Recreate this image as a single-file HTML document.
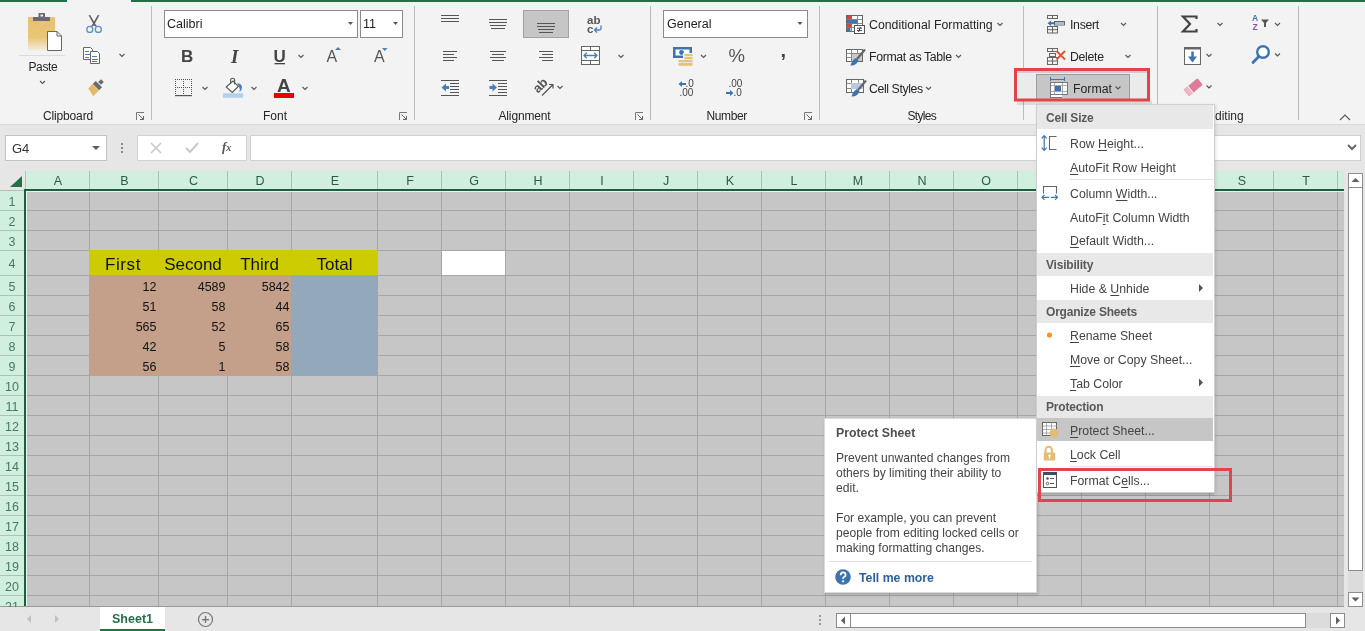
<!DOCTYPE html>
<html><head><meta charset="utf-8">
<style>
*{box-sizing:border-box;margin:0;padding:0}
html,body{width:1365px;height:631px;overflow:hidden;background:#e6e6e6;font-family:"Liberation Sans",sans-serif;color:#262626;position:relative}
.a{position:absolute}
.t{position:absolute;white-space:nowrap;font-size:12px;line-height:14px}
.sep{position:absolute;top:6px;width:1px;height:114px;background:#bcbcbc}
.glabel{position:absolute;top:109px;font-size:12px;line-height:14px;color:#262626;white-space:nowrap}
.chev{position:absolute;width:4px;height:4px;border-right:1px solid #555;border-bottom:1px solid #555;transform:rotate(45deg)}
.box{position:absolute;background:#fff;border:1px solid #ababab}
.dd{position:absolute;width:0;height:0;border-left:4px solid transparent;border-right:4px solid transparent;border-top:4px solid #606060}
.ch{position:absolute;top:171px;height:18px;line-height:20px;text-align:center;color:#2d5c43;font-size:12.5px}
.rh{position:absolute;left:0;width:24px;text-align:center;color:#467a5b;font-size:12.5px}
.big{position:absolute;top:252px;height:24px;line-height:26px;text-align:center;font-size:17px;color:#111}
.num{position:absolute;width:60px;text-align:right;font-size:12.5px;line-height:20px;height:20px;color:#111}
.mh{position:absolute;left:1px;width:175px;height:23px;background:#e8e8e8;font-weight:bold;color:#5a5a5a;font-size:12.5px;line-height:23px;padding-left:8px}
.mi{position:absolute;left:1070px;font-size:12.3px;color:#444;line-height:14px;white-space:nowrap}
.u{text-decoration:underline;text-underline-offset:2px}
.mhd{position:absolute;left:1046px;font-size:12px;letter-spacing:-0.2px;line-height:14px;font-weight:bold;color:#595959;white-space:nowrap}

</style></head><body><div style="will-change:transform;position:absolute;left:0;top:0;width:1365px;height:631px;overflow:hidden">
<div class="a" style="left:0;top:0;width:1365px;height:125px;background:#f3f3f3;border-bottom:1px solid #dadada"></div>
<div class="a" style="left:0;top:0;width:67px;height:2px;background:#217346"></div>
<div class="a" style="left:131px;top:0;width:1234px;height:2px;background:#217346"></div>
<div class="sep" style="left:151px"></div>
<div class="sep" style="left:414px"></div>
<div class="sep" style="left:650px"></div>
<div class="sep" style="left:819px"></div>
<div class="sep" style="left:1023px"></div>
<div class="sep" style="left:1157px"></div>
<div class="sep" style="left:1298px"></div>
<div class="glabel" style="left:43px;letter-spacing:-0.15px">Clipboard</div>
<div class="glabel" style="left:263px">Font</div>
<div class="glabel" style="left:498.5px;letter-spacing:-0.15px">Alignment</div>
<div class="glabel" style="left:706.5px;letter-spacing:-0.4px">Number</div>
<div class="glabel" style="left:907.5px;letter-spacing:-0.7px">Styles</div>
<div class="glabel" style="left:1207px">Editing</div>
<!-- launchers -->
<svg class="a" style="left:0;top:0" width="1365" height="125">
 <defs>
  <linearGradient id="pg" x1="0" y1="0" x2="0" y2="1"><stop offset="0" stop-color="#e8c272"/><stop offset="0.6" stop-color="#e9c576"/><stop offset="1" stop-color="#f3efe6"/></linearGradient>
  <g id="launch"><path d="M0.5,8 V0.5 H8" fill="none" stroke="#777" stroke-width="1"/><path d="M2.5,2.5 L7.5,7.5 M4,7.5 H7.5 V4" fill="none" stroke="#666" stroke-width="1"/></g>
  <path id="chev" d="M0,0 L2.5,2.5 L5,0" fill="none" stroke="#555" stroke-width="1.1"/>
 </defs>
 <use href="#launch" x="136" y="112"/>
 <use href="#launch" x="399" y="112"/>
 <use href="#launch" x="635" y="112"/>
 <use href="#launch" x="804" y="112"/>
 <!-- Paste -->
 <rect x="28" y="17" width="27" height="34" fill="url(#pg)"/>
 <rect x="33" y="17" width="17" height="4" fill="#6b6b6b"/>
 <rect x="38.5" y="13" width="6.5" height="4" fill="#6b6b6b"/>
 <rect x="40.5" y="14.5" width="2.5" height="2" fill="#f3f3f3"/>
 <path d="M47.5,31.5 H57 L61.5,36 V50.5 H47.5 Z" fill="#fff" stroke="#666" stroke-width="1"/>
 <path d="M57,31.5 V36 H61.5" fill="none" stroke="#666" stroke-width="1"/>
 <rect x="19" y="55" width="46" height="1" fill="#dcdcdc"/>
 <use href="#chev" x="40" y="81"/>
 <!-- scissors -->
 <path d="M88.6,15.2 L90.2,15 L95.6,24.5 L94.4,26 Z" fill="#606060"/>
 <path d="M99.4,15.2 L97.8,15 L92.4,24.5 L93.6,26 Z" fill="#606060"/>
 <path d="M91.5,26.5 L94,24 L96.5,26.5" fill="none" stroke="#606060" stroke-width="1.3"/>
 <circle cx="89.8" cy="29.4" r="3" fill="none" stroke="#5b8fc7" stroke-width="1.3"/>
 <circle cx="98.3" cy="29.4" r="3" fill="none" stroke="#5b8fc7" stroke-width="1.3"/>
 <!-- copy -->
 <path d="M83.5,47.5 H90.5 L92.5,49.5 V59.5 H83.5 Z" fill="#fff" stroke="#666" stroke-width="1"/>
 <path d="M85,51.5 H89 M85,54.5 H90 M85,57.5 H89" stroke="#4a7eb8" stroke-width="1" shape-rendering="crispEdges"/>
 <path d="M90.5,51.5 H97.5 L99.5,53.5 V63.5 H90.5 Z" fill="#fff" stroke="#666" stroke-width="1"/>
 <path d="M92,56.5 H97 M92,59.5 H98 M92,61.5 H97" stroke="#4a7eb8" stroke-width="1" shape-rendering="crispEdges"/>
 <use href="#chev" x="119.5" y="54"/>
 <!-- format painter -->
 <g transform="rotate(45 95 88)">
  <rect x="93" y="77.5" width="4" height="4" fill="#6b6b6b"/>
  <rect x="90.5" y="82.5" width="9" height="4.2" fill="#6b6b6b"/>
  <path d="M90.5,87 H99.5 V95 L90.5,93 Z" fill="#e8b86a"/>
 </g>
</svg>
<div class="t" style="left:28.5px;top:60px;font-size:12px;letter-spacing:-0.4px">Paste</div>
<div class="box" style="left:164px;top:10px;width:194px;height:28px;border-color:#8a8a8a"></div>
<div class="t" style="left:167px;top:17px;font-size:12.5px;color:#222">Calibri</div>
<div class="box" style="left:360px;top:10px;width:43px;height:28px;border-color:#8a8a8a"></div>
<div class="t" style="left:363px;top:17px;font-size:12.5px;color:#222">11</div>
<svg class="a" style="left:0;top:0" width="420" height="125">
 <defs><path id="chev2" d="M0,0 L2.5,2.5 L5,0" fill="none" stroke="#555" stroke-width="1.1"/></defs>
 <path d="M348,22 H353 L350.5,25 Z" fill="#555"/>
 <path d="M393,22 H398 L395.5,25 Z" fill="#555"/>
 <use href="#chev2" x="298.5" y="55"/>
 <rect x="274.5" y="63" width="10.5" height="1.3" fill="#444"/>
 <path d="M335,50 L338,47 L341,50 Z" fill="#4a7eb8"/>
 <path d="M382,48 L387.5,48 L384.75,51 Z" fill="#4a7eb8"/>
 <!-- borders -->
 <path d="M175,79.5 H192 M175,87.5 H192 M175.5,79 V95 M183.5,79 V95 M191.5,79 V95" fill="none" stroke="#555" stroke-width="1" stroke-dasharray="1,1" shape-rendering="crispEdges"/>
 <rect x="175" y="95" width="17" height="1.2" fill="#555"/>
 <use href="#chev2" x="202.5" y="87"/>
 <!-- fill bucket -->
 <rect x="223" y="93.3" width="20" height="4.5" fill="#b4d0ea"/>
 <path d="M226.3,87 L233,81 L238.3,86.4 L232.3,92.4 Z" fill="#fff" stroke="#555" stroke-width="1.1" stroke-linejoin="miter"/>
 <path d="M230.6,83.5 V80.3 A2,2 0 0 1 234.6,80.3 V84.6" fill="none" stroke="#555" stroke-width="1.1"/>
 <path d="M237,83.2 Q241.5,83.5 242,87 Q242,90 239.5,92.2 Q240.5,88.5 238.6,86 Z" fill="#4a7eb8"/>
 <use href="#chev2" x="251.5" y="87"/>
 <!-- font color -->
 <rect x="274" y="93" width="20" height="5" fill="#e80000"/>
 <use href="#chev2" x="302.5" y="87"/>
</svg>
<div class="t" style="left:181px;top:48px;font-size:17px;line-height:18px;font-weight:bold;color:#444">B</div>
<div class="t" style="left:231px;top:47px;font-size:19px;line-height:20px;font-weight:bold;font-style:italic;font-family:'Liberation Serif',serif;color:#444">I</div>
<div class="t" style="left:273.5px;top:48px;font-size:17px;line-height:18px;font-weight:bold;color:#444">U</div>
<div class="t" style="left:326.5px;top:48px;font-size:16px;line-height:17px;color:#555">A</div>
<div class="t" style="left:374px;top:48px;font-size:16px;line-height:17px;color:#555">A</div>
<div class="t" style="left:277px;top:76px;font-size:19px;line-height:20px;font-weight:bold;color:#444">A</div>
<div class="a" style="left:523px;top:10px;width:46px;height:28px;background:#c6c6c6;border:1px solid #a2a2a2"></div>
<svg class="a" style="left:0;top:0" width="660" height="125" shape-rendering="crispEdges">
 <g fill="#555">
 <!-- top align -->
 <rect x="441" y="15" width="18" height="1"/><rect x="441" y="18" width="18" height="1"/><rect x="441" y="21" width="18" height="1"/>
 <!-- middle align -->
 <rect x="489" y="19" width="18" height="1"/><rect x="489" y="22" width="18" height="1"/><rect x="490" y="25" width="16" height="1"/><rect x="491" y="28" width="14" height="1"/>
 <!-- bottom align -->
 <rect x="537" y="23" width="18" height="1"/><rect x="537" y="26" width="18" height="1"/><rect x="538" y="29" width="16" height="1"/><rect x="539" y="32" width="14" height="1"/>
 <!-- left align -->
 <rect x="443" y="51" width="14" height="1"/><rect x="443" y="54" width="11" height="1"/><rect x="443" y="57" width="14" height="1"/><rect x="443" y="60" width="11" height="1"/>
 <!-- center -->
 <rect x="490" y="51" width="16" height="1"/><rect x="492" y="54" width="12" height="1"/><rect x="490" y="57" width="16" height="1"/><rect x="492" y="60" width="12" height="1"/>
 <!-- right -->
 <rect x="539" y="51" width="14" height="1"/><rect x="542" y="54" width="11" height="1"/><rect x="539" y="57" width="14" height="1"/><rect x="542" y="60" width="11" height="1"/>
 <!-- decrease indent -->
 <rect x="441" y="80" width="18" height="1"/><rect x="450" y="83" width="9" height="1"/><rect x="450" y="86" width="9" height="1"/><rect x="450" y="89" width="9" height="1"/><rect x="450" y="92" width="9" height="1"/><rect x="441" y="95" width="18" height="1"/>
 <!-- increase indent -->
 <rect x="489" y="80" width="18" height="1"/><rect x="498" y="83" width="9" height="1"/><rect x="498" y="86" width="9" height="1"/><rect x="498" y="89" width="9" height="1"/><rect x="498" y="92" width="9" height="1"/><rect x="489" y="95" width="18" height="1"/>
 </g>
</svg>
<svg class="a" style="left:0;top:0" width="660" height="125">
 <defs><path id="chev3" d="M0,0 L2.5,2.5 L5,0" fill="none" stroke="#555" stroke-width="1.1"/></defs>
 <!-- wrap arrow -->
 <path d="M601,25.5 V28.5 Q601,30 599.5,30 H595" fill="none" stroke="#4a7eb8" stroke-width="1.3"/>
 <path d="M597,27.5 L594.5,30 L597,32.5" fill="none" stroke="#4a7eb8" stroke-width="1.3"/>
 <!-- merge -->
 <g shape-rendering="crispEdges" fill="#666">
 <rect x="581" y="46" width="19" height="19" fill="#fff"/>
 <rect x="581" y="46" width="19" height="1"/><rect x="581" y="64" width="19" height="1"/>
 <rect x="581" y="46" width="1" height="19"/><rect x="599" y="46" width="1" height="19"/>
 <rect x="581" y="50" width="19" height="1"/><rect x="581" y="60" width="19" height="1"/>
 <rect x="590" y="46" width="1" height="4"/><rect x="590" y="61" width="1" height="4"/>
 </g>
 <path d="M584,55.5 H597 M586.7,52.8 L584,55.5 L586.7,58.2 M594.3,52.8 L597,55.5 L594.3,58.2" stroke="#4a7eb8" stroke-width="1.3" fill="none"/>
 <use href="#chev3" x="618.5" y="55"/>
 <!-- indent arrows -->
 <path d="M441.5,87.5 L446,83.5 V86 H449 V89 H446 V91.5 Z" fill="#4a7eb8"/>
 <path d="M497,87.5 L492.5,83.5 V86 H489.5 V89 H492.5 V91.5 Z" fill="#4a7eb8"/>
 <!-- orientation -->
 <path d="M542,95.5 L553,84.5 M549,84.5 H553 V88.5" stroke="#555" stroke-width="1.2" fill="none"/>
 <use href="#chev3" x="557.5" y="86"/>
</svg>
<div class="t" style="left:587px;top:14px;font-size:11.5px;line-height:12px;font-weight:bold;color:#555;letter-spacing:0px">ab</div>
<div class="t" style="left:587px;top:23px;font-size:11.5px;line-height:12px;font-weight:bold;color:#555">c</div>
<div class="t" style="left:533px;top:78.5px;font-size:13px;line-height:13px;font-weight:bold;color:#555;transform:rotate(-45deg);transform-origin:7px 7px">ab</div>
<div class="box" style="left:663px;top:10px;width:145px;height:28px;border-color:#8a8a8a"></div>
<div class="t" style="left:667px;top:17px;font-size:12.5px;color:#222">General</div>
<svg class="a" style="left:0;top:0" width="830" height="125">
 <defs><path id="chev4" d="M0,0 L2.5,2.5 L5,0" fill="none" stroke="#555" stroke-width="1.1"/></defs>
 <path d="M797.5,22 H802.5 L800,25 Z" fill="#555"/>
 <!-- accounting -->
 <rect x="673" y="47" width="19" height="11" fill="#3d74b0"/>
 <rect x="675.5" y="49.5" width="14" height="6" fill="#fff"/>
 <circle cx="681.5" cy="52.5" r="2.4" fill="#3d74b0"/>
 <rect x="683" y="53" width="10" height="13.5" fill="#f3f3f3"/>
 <rect x="678" y="59" width="7" height="7.5" fill="#f3f3f3"/>
 <g fill="#e6c277">
  <rect x="684.5" y="54" width="8" height="2.2"/><rect x="684.5" y="57" width="8" height="2.2"/><rect x="684.5" y="60" width="8" height="2.2"/>
  <rect x="678.5" y="60" width="6.5" height="2.2"/><rect x="678.5" y="63" width="6.5" height="2.8"/><rect x="684.5" y="63" width="8" height="2.8"/>
 </g>
 <use href="#chev4" x="701" y="55"/>
 <!-- increase decimal arrow -->
 <path d="M678.5,84 L682,81 V83 H686 V85 H682 V87 Z" fill="#3d74b0"/>
 <path d="M733.5,93 L730,90 V92 H726 V94 H730 V96 Z" fill="#3d74b0"/>
</svg>
<div class="t" style="left:728.5px;top:46px;font-size:18.5px;line-height:20px;color:#555">%</div>
<div class="t" style="left:780.5px;top:40px;font-size:20px;line-height:20px;font-weight:bold;color:#444">,</div>
<div class="t" style="left:685.5px;top:78px;font-size:10px;line-height:11px;color:#444">.0</div>
<div class="t" style="left:679.5px;top:87px;font-size:10px;line-height:11px;color:#444">.00</div>
<div class="t" style="left:728.5px;top:78px;font-size:10px;line-height:11px;color:#444">.00</div>
<div class="t" style="left:733.5px;top:87px;font-size:10px;line-height:11px;color:#444">.0</div>
<svg class="a" style="left:0;top:0" width="1030" height="125">
 <defs><path id="chev5" d="M0,0 L2.5,2.5 L5,0" fill="none" stroke="#555" stroke-width="1.1"/></defs>
 <!-- CF -->
 <rect x="846.5" y="15.5" width="16" height="16" fill="#fff" stroke="#666" stroke-width="1"/>
 <path d="M846.5,19.5 H862.5 M846.5,23.5 H862.5 M846.5,27.5 H862.5 M851.5,15.5 V31.5 M857.5,15.5 V31.5" stroke="#888" stroke-width="1" fill="none"/>
 <rect x="847" y="16" width="4.5" height="3.5" fill="#d9442c"/>
 <rect x="847" y="20" width="10.5" height="3.5" fill="#3d74b0"/>
 <rect x="847" y="24" width="4.5" height="3.5" fill="#d9442c"/>
 <rect x="847" y="28" width="3.5" height="3.5" fill="#3d74b0"/>
 <rect x="854.5" y="25.5" width="10" height="8" fill="#fff" stroke="#555" stroke-width="1"/>
 <path d="M857,28.2 H862 M857,30.6 H862 M860.5,27 L858.5,32" stroke="#333" stroke-width="0.9"/>
 <use href="#chev5" x="997.5" y="23"/>
 <!-- FaT -->
 <rect x="846.5" y="49.5" width="16" height="12" fill="#fff" stroke="#666" stroke-width="1"/>
 <path d="M846.5,53.5 H862.5 M846.5,57.5 H862.5 M851.5,49.5 V61.5 M857.5,49.5 V61.5" stroke="#888" stroke-width="1" fill="none"/>
 <rect x="852" y="54" width="10" height="7" fill="#c9c9c9"/>
 <path d="M865,49.5 L857,59" stroke="#666" stroke-width="2.2"/>
 <path d="M856,58 L858.5,60.5 Q856,66 850.5,65.5 Q852,60 856,58 Z" fill="#3d74b0"/>
 <use href="#chev5" x="956" y="55"/>
 <!-- Cell styles -->
 <rect x="846.5" y="79.5" width="17" height="13" fill="#fff" stroke="#666" stroke-width="1"/>
 <path d="M846.5,83.5 H863.5 M846.5,88.5 H863.5 M851.5,79.5 V92.5 M858.5,79.5 V92.5" stroke="#888" stroke-width="1" fill="none"/>
 <rect x="851" y="83" width="12" height="6" fill="#b7c9e2"/>
 <path d="M866,80.5 L858,90" stroke="#666" stroke-width="2.2"/>
 <path d="M857,89 L859.5,91.5 Q857,97 851.5,96.5 Q853,91 857,89 Z" fill="#3d74b0"/>
 <use href="#chev5" x="926" y="87"/>
</svg>
<div class="t" style="left:869px;top:18px;font-size:12.3px;color:#262626">Conditional Formatting</div>
<div class="t" style="left:869px;top:50px;font-size:12.3px;color:#262626;letter-spacing:-0.35px">Format as Table</div>
<div class="t" style="left:869px;top:82px;font-size:12.3px;color:#262626;letter-spacing:-0.4px">Cell Styles</div>
<svg class="a" style="left:0;top:0" width="1365" height="125">
 <defs><path id="chev6" d="M0,0 L2.5,2.5 L5,0" fill="none" stroke="#555" stroke-width="1.1"/></defs>
 <!-- Insert icon -->
 <g fill="none" stroke="#666" stroke-width="1">
  <rect x="1047.5" y="15.5" width="10" height="3"/><path d="M1052.5,15.5 V18.5"/>
  <rect x="1047.5" y="26.5" width="10" height="6.5"/><path d="M1047.5,29.7 H1057.5 M1052.5,26.5 V33"/>
  <rect x="1054.5" y="21.5" width="10" height="3.5"/>
 </g>
 <rect x="1055" y="22" width="9" height="2.5" fill="#a9c0da"/>
 <path d="M1047.5,23.25 L1051,20.5 V22.3 H1054 V24.2 H1051 V26 Z" fill="#3d74b0"/>
 <use href="#chev6" x="1121" y="23"/>
 <!-- Delete icon -->
 <g fill="none" stroke="#666" stroke-width="1">
  <rect x="1047.5" y="48.5" width="10" height="3"/><path d="M1052.5,48.5 V51.5"/>
  <rect x="1049.5" y="53.5" width="6" height="3"/>
  <rect x="1047.5" y="57.5" width="10" height="7"/><path d="M1047.5,61 H1057.5 M1052.5,57.5 V64.5"/>
 </g>
 <path d="M1056.5,51 L1065,59.5 M1065,51 L1056.5,59.5" stroke="#e0552f" stroke-width="1.8"/>
 <use href="#chev6" x="1125.5" y="55"/>
 <!-- red rect highlight -->
 <rect x="1017" y="71" width="130" height="28" fill="#ebebeb"/>
 <rect x="1036.5" y="74.5" width="93" height="25" fill="#c6c6c6" stroke="#9c9c9c" stroke-width="1"/>
 <!-- Format icon -->
 <g shape-rendering="crispEdges">
 <rect x="1050" y="77" width="1" height="4" fill="#3d74b0"/><rect x="1064" y="77" width="1" height="4" fill="#3d74b0"/>
 <rect x="1051" y="79" width="13" height="1" fill="#3d74b0"/>
 <rect x="1051" y="82" width="17" height="13" fill="#fff"/>
 <rect x="1051" y="82" width="17" height="1" fill="#777"/><rect x="1051" y="94" width="17" height="1" fill="#777"/>
 <rect x="1050" y="82" width="1" height="13" fill="#777"/><rect x="1067" y="82" width="1" height="13" fill="#777"/>
 <rect x="1051" y="85" width="16" height="1" fill="#aaa"/><rect x="1051" y="91" width="16" height="1" fill="#aaa"/>
 <rect x="1054" y="83" width="1" height="11" fill="#aaa"/><rect x="1062" y="83" width="1" height="11" fill="#aaa"/>
 <rect x="1055" y="86" width="6" height="5" fill="#3d74b0"/>
 <rect x="1050" y="95" width="1" height="3" fill="#777"/><rect x="1051" y="97" width="11" height="1" fill="#777"/>
 <rect x="1051" y="95" width="11" height="2" fill="#fff"/>
 </g>
 <use href="#chev6" x="1115.5" y="86.5"/>
 <!-- shadow + red border -->
 <rect x="1017" y="101" width="135" height="4" fill="#000" opacity="0.1"/>
 <rect x="1017" y="71" width="130" height="2" fill="#000" opacity="0.12"/>
 <rect x="1015.5" y="69.5" width="133" height="30.5" fill="none" stroke="#e24447" stroke-width="3"/>
 <!-- Editing -->
 <path d="M1196.5,19 V16.5 H1183 L1190,24 L1183,31.5 H1196.5 V29" fill="none" stroke="#444" stroke-width="2.2" stroke-linejoin="miter"/>
 <use href="#chev6" x="1217.5" y="23"/>
 <path d="M1261,19.5 H1269 L1266,23 V27 H1264 V23 Z" fill="#555"/>
 <use href="#chev6" x="1275" y="23"/>
 <rect x="1184.5" y="47.5" width="16" height="17" fill="#fff" stroke="#666" stroke-width="1"/>
 <rect x="1184" y="47" width="17" height="2.5" fill="#666"/>
 <path d="M1192.5,51.5 V58" stroke="#3d74b0" stroke-width="2.5"/>
 <path d="M1188,56.5 L1192.5,62.5 L1197,56.5 Z" fill="#3d74b0"/>
 <use href="#chev6" x="1206.5" y="54"/>
 <circle cx="1263" cy="52" r="5.8" fill="#fff" stroke="#3d74b0" stroke-width="2.4"/>
 <path d="M1258.8,56.5 L1253,62.5" stroke="#3d74b0" stroke-width="2.8" stroke-linecap="round"/>
 <use href="#chev6" x="1275" y="53.5"/>
 <g transform="rotate(-40 1193 87)">
  <rect x="1184" y="83" width="18" height="8.5" rx="1.2" fill="#e07b9a"/>
  <rect x="1184" y="83" width="5" height="8.5" fill="#f0b5c6"/>
  <rect x="1189" y="83" width="1" height="8.5" fill="#fff"/>
 </g>
 <use href="#chev6" x="1206.5" y="85.5"/>
 <path d="M1340,120 L1345,115 L1350,120" fill="none" stroke="#555" stroke-width="1.1"/>
</svg>
<div class="t" style="left:1070px;top:18px;font-size:12.3px;color:#262626;letter-spacing:-0.3px">Insert</div>
<div class="t" style="left:1070px;top:50px;font-size:12.3px;color:#262626;letter-spacing:-0.3px">Delete</div>
<div class="t" style="left:1073px;top:82px;font-size:12.3px;color:#262626">Format</div>
<div class="t" style="left:1252px;top:14px;font-size:8.5px;line-height:9px;font-weight:bold;color:#3d74b0">A</div>
<div class="t" style="left:1252.5px;top:22.5px;font-size:8.5px;line-height:9px;font-weight:bold;color:#8b57a8">Z</div>

<div class="box" style="left:5px;top:135px;width:102px;height:26px;border-color:#c3c3c3"></div>
<div class="t" style="left:12px;top:142px;font-size:13px;color:#333">G4</div>
<div class="dd" style="left:92px;top:146px"></div>
<div class="a" style="left:121px;top:143px;width:2px;height:2px;background:#8a8a8a"></div><div class="a" style="left:121px;top:147px;width:2px;height:2px;background:#8a8a8a"></div><div class="a" style="left:121px;top:151px;width:2px;height:2px;background:#8a8a8a"></div>
<div class="box" style="left:137px;top:135px;width:110px;height:26px;border-color:#d0d0d0"></div>
<svg class="a" style="left:148px;top:140px" width="90" height="16"><path d="M3,3 L13,13 M13,3 L3,13" stroke="#c8c8c8" stroke-width="1.5"/><path d="M38,8 L42,12 L50,3" stroke="#c8c8c8" stroke-width="2" fill="none"/></svg>
<div class="t" style="left:222px;top:140px;font-family:'Liberation Serif',serif;font-style:italic;font-weight:bold;font-size:13px;color:#555">f<span style="font-size:10px">x</span></div>
<div class="box" style="left:250px;top:135px;width:1111px;height:26px;border-color:#d0d0d0"></div>
<svg class="a" style="left:1346px;top:143px" width="12" height="10"><path d="M2,2 L6,6 L10,2" stroke="#666" stroke-width="2" fill="none"/></svg>
<div class="a" style="left:0;top:170px;width:1365px;height:437px;background:#e6e6e6"></div>
<div class="a" style="left:26px;top:171px;width:1318px;height:18px;background:#d0efde"></div>
<div class="a" style="left:0;top:191px;width:24px;height:415px;background:#d0efde"></div>
<div class="a" style="left:26px;top:191px;width:1318px;height:415px;background:#c6c6c6"></div>
<svg class="a" style="left:0;top:170px" width="26" height="20"><polygon points="10,17 22,17 22,6" fill="#217346"/></svg>
<svg class="a" style="left:0;top:0" width="1365" height="631" shape-rendering="crispEdges">
<rect x="89" y="171" width="1" height="18" fill="#a9c4b2"/>
<rect x="158" y="171" width="1" height="18" fill="#a9c4b2"/>
<rect x="227" y="171" width="1" height="18" fill="#a9c4b2"/>
<rect x="291" y="171" width="1" height="18" fill="#a9c4b2"/>
<rect x="377" y="171" width="1" height="18" fill="#a9c4b2"/>
<rect x="441" y="171" width="1" height="18" fill="#a9c4b2"/>
<rect x="505" y="171" width="1" height="18" fill="#a9c4b2"/>
<rect x="569" y="171" width="1" height="18" fill="#a9c4b2"/>
<rect x="633" y="171" width="1" height="18" fill="#a9c4b2"/>
<rect x="697" y="171" width="1" height="18" fill="#a9c4b2"/>
<rect x="761" y="171" width="1" height="18" fill="#a9c4b2"/>
<rect x="825" y="171" width="1" height="18" fill="#a9c4b2"/>
<rect x="889" y="171" width="1" height="18" fill="#a9c4b2"/>
<rect x="953" y="171" width="1" height="18" fill="#a9c4b2"/>
<rect x="1017" y="171" width="1" height="18" fill="#a9c4b2"/>
<rect x="1081" y="171" width="1" height="18" fill="#a9c4b2"/>
<rect x="1145" y="171" width="1" height="18" fill="#a9c4b2"/>
<rect x="1209" y="171" width="1" height="18" fill="#a9c4b2"/>
<rect x="1273" y="171" width="1" height="18" fill="#a9c4b2"/>
<rect x="1337" y="171" width="1" height="18" fill="#a9c4b2"/>
<rect x="0" y="210" width="24" height="1" fill="#a9c4b2"/>
<rect x="0" y="230" width="24" height="1" fill="#a9c4b2"/>
<rect x="0" y="250" width="24" height="1" fill="#a9c4b2"/>
<rect x="0" y="275" width="24" height="1" fill="#a9c4b2"/>
<rect x="0" y="295" width="24" height="1" fill="#a9c4b2"/>
<rect x="0" y="315" width="24" height="1" fill="#a9c4b2"/>
<rect x="0" y="335" width="24" height="1" fill="#a9c4b2"/>
<rect x="0" y="355" width="24" height="1" fill="#a9c4b2"/>
<rect x="0" y="375" width="24" height="1" fill="#a9c4b2"/>
<rect x="0" y="395" width="24" height="1" fill="#a9c4b2"/>
<rect x="0" y="415" width="24" height="1" fill="#a9c4b2"/>
<rect x="0" y="435" width="24" height="1" fill="#a9c4b2"/>
<rect x="0" y="455" width="24" height="1" fill="#a9c4b2"/>
<rect x="0" y="475" width="24" height="1" fill="#a9c4b2"/>
<rect x="0" y="495" width="24" height="1" fill="#a9c4b2"/>
<rect x="0" y="515" width="24" height="1" fill="#a9c4b2"/>
<rect x="0" y="535" width="24" height="1" fill="#a9c4b2"/>
<rect x="0" y="555" width="24" height="1" fill="#a9c4b2"/>
<rect x="0" y="575" width="24" height="1" fill="#a9c4b2"/>
<rect x="0" y="595" width="24" height="1" fill="#a9c4b2"/>
<rect x="89" y="191" width="1" height="415" fill="#a6a6a6"/>
<rect x="158" y="191" width="1" height="415" fill="#a6a6a6"/>
<rect x="227" y="191" width="1" height="415" fill="#a6a6a6"/>
<rect x="291" y="191" width="1" height="415" fill="#a6a6a6"/>
<rect x="377" y="191" width="1" height="415" fill="#a6a6a6"/>
<rect x="441" y="191" width="1" height="415" fill="#a6a6a6"/>
<rect x="505" y="191" width="1" height="415" fill="#a6a6a6"/>
<rect x="569" y="191" width="1" height="415" fill="#a6a6a6"/>
<rect x="633" y="191" width="1" height="415" fill="#a6a6a6"/>
<rect x="697" y="191" width="1" height="415" fill="#a6a6a6"/>
<rect x="761" y="191" width="1" height="415" fill="#a6a6a6"/>
<rect x="825" y="191" width="1" height="415" fill="#a6a6a6"/>
<rect x="889" y="191" width="1" height="415" fill="#a6a6a6"/>
<rect x="953" y="191" width="1" height="415" fill="#a6a6a6"/>
<rect x="1017" y="191" width="1" height="415" fill="#a6a6a6"/>
<rect x="1081" y="191" width="1" height="415" fill="#a6a6a6"/>
<rect x="1145" y="191" width="1" height="415" fill="#a6a6a6"/>
<rect x="1209" y="191" width="1" height="415" fill="#a6a6a6"/>
<rect x="1273" y="191" width="1" height="415" fill="#a6a6a6"/>
<rect x="1337" y="191" width="1" height="415" fill="#a6a6a6"/>
<rect x="26" y="210" width="1318" height="1" fill="#a6a6a6"/>
<rect x="26" y="230" width="1318" height="1" fill="#a6a6a6"/>
<rect x="26" y="250" width="1318" height="1" fill="#a6a6a6"/>
<rect x="26" y="275" width="1318" height="1" fill="#a6a6a6"/>
<rect x="26" y="295" width="1318" height="1" fill="#a6a6a6"/>
<rect x="26" y="315" width="1318" height="1" fill="#a6a6a6"/>
<rect x="26" y="335" width="1318" height="1" fill="#a6a6a6"/>
<rect x="26" y="355" width="1318" height="1" fill="#a6a6a6"/>
<rect x="26" y="375" width="1318" height="1" fill="#a6a6a6"/>
<rect x="26" y="395" width="1318" height="1" fill="#a6a6a6"/>
<rect x="26" y="415" width="1318" height="1" fill="#a6a6a6"/>
<rect x="26" y="435" width="1318" height="1" fill="#a6a6a6"/>
<rect x="26" y="455" width="1318" height="1" fill="#a6a6a6"/>
<rect x="26" y="475" width="1318" height="1" fill="#a6a6a6"/>
<rect x="26" y="495" width="1318" height="1" fill="#a6a6a6"/>
<rect x="26" y="515" width="1318" height="1" fill="#a6a6a6"/>
<rect x="26" y="535" width="1318" height="1" fill="#a6a6a6"/>
<rect x="26" y="555" width="1318" height="1" fill="#a6a6a6"/>
<rect x="26" y="575" width="1318" height="1" fill="#a6a6a6"/>
<rect x="26" y="595" width="1318" height="1" fill="#a6a6a6"/>
<rect x="89" y="250" width="289" height="25" fill="#cccc00"/>
<rect x="89" y="275" width="202" height="101" fill="#c4a08a"/>
<rect x="291" y="275" width="87" height="101" fill="#94a8bc"/>
<rect x="442" y="251" width="63" height="24" fill="#ffffff"/>
<rect x="25" y="171" width="1" height="18" fill="#b4c2b9"/>
<rect x="0" y="190" width="24" height="1" fill="#b4c2b9"/>
<rect x="24" y="189" width="1320" height="2" fill="#1d5e3b"/>
<rect x="24" y="189" width="2" height="417" fill="#1d5e3b"/>
<rect x="26" y="191" width="1318" height="1" fill="#e9f3ee"/>
<rect x="26" y="191" width="1" height="415" fill="#e9f3ee"/>
<rect x="0" y="606" width="1344" height="1" fill="#9a9a9a"/>
</svg>
<div class="ch" style="left:26px;width:64px">A</div>
<div class="ch" style="left:90px;width:69px">B</div>
<div class="ch" style="left:159px;width:69px">C</div>
<div class="ch" style="left:228px;width:64px">D</div>
<div class="ch" style="left:292px;width:86px">E</div>
<div class="ch" style="left:378px;width:64px">F</div>
<div class="ch" style="left:442px;width:64px">G</div>
<div class="ch" style="left:506px;width:64px">H</div>
<div class="ch" style="left:570px;width:64px">I</div>
<div class="ch" style="left:634px;width:64px">J</div>
<div class="ch" style="left:698px;width:64px">K</div>
<div class="ch" style="left:762px;width:64px">L</div>
<div class="ch" style="left:826px;width:64px">M</div>
<div class="ch" style="left:890px;width:64px">N</div>
<div class="ch" style="left:954px;width:64px">O</div>
<div class="ch" style="left:1018px;width:64px">P</div>
<div class="ch" style="left:1082px;width:64px">Q</div>
<div class="ch" style="left:1146px;width:64px">R</div>
<div class="ch" style="left:1210px;width:64px">S</div>
<div class="ch" style="left:1274px;width:64px">T</div>
<div class="rh" style="top:192px;height:20px;line-height:20px">1</div>
<div class="rh" style="top:212px;height:20px;line-height:20px">2</div>
<div class="rh" style="top:232px;height:20px;line-height:20px">3</div>
<div class="rh" style="top:252px;height:25px;line-height:25px">4</div>
<div class="rh" style="top:277px;height:20px;line-height:20px">5</div>
<div class="rh" style="top:297px;height:20px;line-height:20px">6</div>
<div class="rh" style="top:317px;height:20px;line-height:20px">7</div>
<div class="rh" style="top:337px;height:20px;line-height:20px">8</div>
<div class="rh" style="top:357px;height:20px;line-height:20px">9</div>
<div class="rh" style="top:377px;height:20px;line-height:20px">10</div>
<div class="rh" style="top:397px;height:20px;line-height:20px">11</div>
<div class="rh" style="top:417px;height:20px;line-height:20px">12</div>
<div class="rh" style="top:437px;height:20px;line-height:20px">13</div>
<div class="rh" style="top:457px;height:20px;line-height:20px">14</div>
<div class="rh" style="top:477px;height:20px;line-height:20px">15</div>
<div class="rh" style="top:497px;height:20px;line-height:20px">16</div>
<div class="rh" style="top:517px;height:20px;line-height:20px">17</div>
<div class="rh" style="top:537px;height:20px;line-height:20px">18</div>
<div class="rh" style="top:557px;height:20px;line-height:20px">19</div>
<div class="rh" style="top:577px;height:20px;line-height:20px">20</div>
<div class="rh" style="top:597px;height:20px;line-height:20px">21</div>
<div class="big" style="left:89px;width:68px;letter-spacing:0.6px">First</div>
<div class="big" style="left:159px;width:68px">Second</div>
<div class="big" style="left:228px;width:63px">Third</div>
<div class="big" style="left:292px;width:85px">Total</div>
<div class="num" style="left:96.5px;top:277px">12</div>
<div class="num" style="left:165.5px;top:277px">4589</div>
<div class="num" style="left:229.5px;top:277px">5842</div>
<div class="num" style="left:96.5px;top:297px">51</div>
<div class="num" style="left:165.5px;top:297px">58</div>
<div class="num" style="left:229.5px;top:297px">44</div>
<div class="num" style="left:96.5px;top:317px">565</div>
<div class="num" style="left:165.5px;top:317px">52</div>
<div class="num" style="left:229.5px;top:317px">65</div>
<div class="num" style="left:96.5px;top:337px">42</div>
<div class="num" style="left:165.5px;top:337px">5</div>
<div class="num" style="left:229.5px;top:337px">58</div>
<div class="num" style="left:96.5px;top:357px">56</div>
<div class="num" style="left:165.5px;top:357px">1</div>
<div class="num" style="left:229.5px;top:357px">58</div>
<div class="a" style="left:0;top:607px;width:1365px;height:24px;background:#e6e6e6"></div>
<div class="a" style="left:100px;top:607px;width:65px;height:24px;background:#fff"></div>
<div class="a" style="left:100px;top:629px;width:65px;height:2px;background:#217346"></div>
<div class="t" style="left:112px;top:612px;font-weight:bold;color:#217346;font-size:12.5px">Sheet1</div>
<svg class="a" style="left:16px;top:610px" width="50" height="18"><polygon points="11,9 15,5 15,13" fill="#c0c0c0"/><polygon points="39,5 43,9 39,13" fill="#c0c0c0"/></svg>
<svg class="a" style="left:197px;top:611px" width="18" height="18"><circle cx="8.5" cy="8.5" r="7" fill="none" stroke="#777" stroke-width="1.2"/><rect x="5" y="8" width="7" height="1.4" fill="#777"/><rect x="7.8" y="5" width="1.4" height="7" fill="#777"/></svg>
<div class="a" style="left:836px;top:613px;width:509px;height:15px;background:#dcdcdc"></div>
<div class="a" style="left:836px;top:613px;width:15px;height:15px;background:#fff;border:1px solid #888"></div>
<div class="a" style="left:850px;top:613px;width:456px;height:15px;background:#fff;border:1px solid #8c8c8c"></div>
<div class="a" style="left:1330px;top:613px;width:15px;height:15px;background:#fff;border:1px solid #8c8c8c"></div>
<svg class="a" style="left:836px;top:613px" width="15" height="15"><polygon points="5,7.5 9,3.5 9,11.5" fill="#606060"/></svg>
<svg class="a" style="left:1330px;top:613px" width="15" height="15"><polygon points="10,7.5 6,3.5 6,11.5" fill="#606060"/></svg>
<div class="a" style="left:819px;top:615px;width:2px;height:2px;background:#999"></div><div class="a" style="left:819px;top:619px;width:2px;height:2px;background:#999"></div><div class="a" style="left:819px;top:623px;width:2px;height:2px;background:#999"></div>
<div class="a" style="left:1348px;top:173px;width:15px;height:434px;background:#dcdcdc"></div>
<div class="a" style="left:1348px;top:173px;width:15px;height:15px;background:#fff;border:1px solid #8c8c8c"></div>
<div class="a" style="left:1348px;top:187px;width:15px;height:384px;background:#fff;border:1px solid #8c8c8c"></div>
<div class="a" style="left:1348px;top:592px;width:15px;height:15px;background:#fff;border:1px solid #8c8c8c"></div>
<svg class="a" style="left:1348px;top:173px" width="15" height="15"><polygon points="3.5,9 7.5,5 11.5,9" fill="#606060"/></svg>
<svg class="a" style="left:1348px;top:592px" width="15" height="15"><polygon points="3.5,5.5 7.5,9.5 11.5,5.5" fill="#606060"/></svg>
<!-- tooltip -->
<div class="a" style="left:824px;top:418px;width:213px;height:175px;background:#fff;border:1px solid #dadada;box-shadow:1px 2px 3px rgba(0,0,0,0.15)"></div>
<div class="t" style="left:836px;top:425.5px;font-size:12.3px;font-weight:bold;color:#505050">Protect Sheet</div>
<div class="t" style="left:836px;top:450.5px;font-size:12.1px;line-height:15px;color:#444">Prevent unwanted changes from<br>others by limiting their ability to<br>edit.<br><br>For example, you can prevent<br>people from editing locked cells or<br>making formatting changes.</div>
<div class="a" style="left:829px;top:561px;width:203px;height:1px;background:#e2e2e2"></div>
<svg class="a" style="left:835px;top:569px" width="17" height="17"><circle cx="8" cy="8" r="7.8" fill="#3d74b0"/><path d="M5.6,6.3 Q5.6,3.4 8.1,3.4 Q10.6,3.4 10.6,5.9 Q10.6,7.3 9,8.1 Q8.1,8.6 8.1,9.9" fill="none" stroke="#fff" stroke-width="1.7"/><circle cx="8.1" cy="12.3" r="1.1" fill="#fff"/></svg>
<div class="t" style="left:859px;top:571px;font-size:12.3px;font-weight:bold;color:#2f5f98">Tell me more</div>

<!-- menu -->
<div class="a" style="left:1036px;top:104px;width:179px;height:389px;background:#fff;border:1px solid #cfcfcf;box-shadow:1px 1px 3px rgba(0,0,0,0.12)"></div>
<div class="a" style="left:1037px;top:105px;width:176px;height:24px;background:#e8e8e8"></div>
<div class="a" style="left:1037px;top:253px;width:176px;height:23px;background:#e8e8e8"></div>
<div class="a" style="left:1037px;top:300px;width:176px;height:23px;background:#e8e8e8"></div>
<div class="a" style="left:1037px;top:396px;width:176px;height:22px;background:#e8e8e8"></div>
<div class="a" style="left:1037px;top:418px;width:176px;height:23px;background:#c6c6c6"></div>
<div class="a" style="left:1070px;top:179px;width:143px;height:1px;background:#e2e2e2"></div>
<div class="a" style="left:1070px;top:466px;width:143px;height:1px;background:#e2e2e2"></div>
<div class="mhd" style="top:110.5px">Cell Size</div>
<div class="mhd" style="top:257.5px">Visibility</div>
<div class="mhd" style="top:304.5px">Organize Sheets</div>
<div class="mhd" style="top:400px">Protection</div>
<div class="mi" style="top:137px">Row <span class="u">H</span>eight...</div>
<div class="mi" style="top:160.5px"><span class="u">A</span>utoFit Row Height</div>
<div class="mi" style="top:186.5px">Column <span class="u">W</span>idth...</div>
<div class="mi" style="top:210.5px">AutoF<span class="u">i</span>t Column Width</div>
<div class="mi" style="top:234px"><span class="u">D</span>efault Width...</div>
<div class="mi" style="top:281.5px">Hide &amp; <span class="u">U</span>nhide</div>
<div class="mi" style="top:328.5px"><span class="u">R</span>ename Sheet</div>
<div class="mi" style="top:353px"><span class="u">M</span>ove or Copy Sheet...</div>
<div class="mi" style="top:376.5px"><span class="u">T</span>ab Color</div>
<div class="mi" style="top:424px"><span class="u">P</span>rotect Sheet...</div>
<div class="mi" style="top:447.5px"><span class="u">L</span>ock Cell</div>
<div class="mi" style="top:473.5px">Format C<span class="u">e</span>lls...</div>
<svg class="a" style="left:1036px;top:104px" width="200" height="400">
 <!-- submenu arrows -->
 <path d="M163,180 L167,184 L163,188 Z" fill="#555"/>
 <path d="M163,274.5 L167,278.5 L163,282.5 Z" fill="#555"/>
 <circle cx="13.5" cy="231" r="2.6" fill="#f0962a"/>
 <!-- row height icon -->
 <g stroke="#3d74b0" stroke-width="1.2" fill="none">
  <path d="M8.2,32 V46 M5.7,34.3 L8.2,31.7 L10.7,34.3 M5.7,43.7 L8.2,46.3 L10.7,43.7"/>
  <path d="M6,93.3 H21.5 M8.5,90.8 L6,93.3 L8.5,95.8 M12.5,93.3 M19,90.8 L21.5,93.3 L19,95.8"/>
 </g>
 <path d="M20.5,32.5 H13.5 V45.5 H20.5" fill="none" stroke="#666" stroke-width="1.1"/>
 <path d="M7.5,89.5 V82.5 H20.5 V89.5" fill="none" stroke="#666" stroke-width="1.1"/>
 <rect x="13" y="92.7" width="2" height="1.2" fill="#fff"/>
 <!-- protect sheet icon -->
 <rect x="6.5" y="318.5" width="14" height="13" fill="#fff" stroke="#666" stroke-width="1"/>
 <path d="M6.5,322 H20.5 M6.5,325.5 H20.5 M6.5,329 H20.5 M10.5,318.5 V331.5 M15.5,318.5 V331.5" stroke="#999" stroke-width="0.8" fill="none"/>
 <circle cx="18" cy="329" r="4.5" fill="#e2bd73"/>
 <!-- lock -->
 <path d="M9.5,349 V346 A3.2,3.2 0 0 1 15.9,346 V349" fill="none" stroke="#e2bd73" stroke-width="2"/>
 <rect x="7.8" y="348.5" width="11.4" height="8" rx="0.8" fill="#e2bd73"/>
 <circle cx="13.5" cy="351.8" r="1.2" fill="#fff"/>
 <rect x="13" y="352" width="1" height="3" fill="#fff"/>
 <!-- format cells icon -->
 <rect x="7.5" y="368.5" width="13" height="15" fill="#fff" stroke="#555" stroke-width="1"/>
 <rect x="7" y="368" width="14" height="3" fill="#3a4e6a"/>
 <circle cx="11.5" cy="374.5" r="1.3" fill="#555"/>
 <circle cx="11.5" cy="379.5" r="1.3" fill="none" stroke="#555" stroke-width="0.9"/>
 <path d="M14,374.5 H18 M14,379.5 H18" stroke="#555" stroke-width="1"/>
 <!-- shadow inside red rect -->
 <rect x="5" y="389" width="173" height="3" fill="#000" opacity="0.08"/>
</svg>
<div class="a" style="left:1038px;top:468px;width:194px;height:34px;border:3px solid #e24447"></div>

</div></body></html>
